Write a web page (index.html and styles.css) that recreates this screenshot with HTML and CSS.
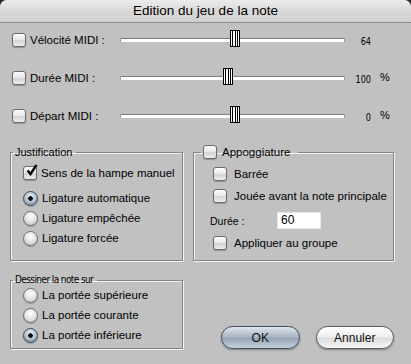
FILE: index.html
```html
<!DOCTYPE html>
<html lang="fr">
<head>
  <meta charset="UTF-8" />
  <title>Edition du jeu de la note</title>
  <link rel="stylesheet" href="styles.css">
</head>
<body>
  <div class="window">
    <div class="titlebar">Edition du jeu de la note</div>

    <div class="content">
      <div class="sliders">
        <div class="srow">
          <span class="cb"></span>
          <span class="slabel">Vélocité MIDI :</span>
          <div class="track"><span class="thumb" style="left:109px"></span></div>
          <span class="val">64</span>
          <span class="unit"></span>
        </div>
        <div class="srow">
          <span class="cb"></span>
          <span class="slabel">Durée MIDI :</span>
          <div class="track"><span class="thumb" style="left:102px"></span></div>
          <span class="val">100</span>
          <span class="unit">%</span>
        </div>
        <div class="srow">
          <span class="cb"></span>
          <span class="slabel">Départ MIDI :</span>
          <div class="track"><span class="thumb" style="left:109px"></span></div>
          <span class="val">0</span>
          <span class="unit">%</span>
        </div>
      </div>

      <div class="groups">
        <fieldset class="group just">
          <legend>Justification</legend>
          <div class="item first">
            <span class="cb on">
              <svg width="13" height="13" viewBox="0 0 13 13"><path d="M2.5 6.5 L5.5 10 L11.5 1" fill="none" stroke="#000" stroke-width="2.4" stroke-linejoin="miter"/></svg>
            </span>
            <span>Sens de la hampe manuel</span>
          </div>
          <div class="radios">
            <div class="item"><span class="rb on"></span><span>Ligature automatique</span></div>
            <div class="item"><span class="rb"></span><span>Ligature empêchée</span></div>
            <div class="item"><span class="rb"></span><span>Ligature forcée</span></div>
          </div>
        </fieldset>

        <fieldset class="group appo">
          <legend><span class="cb"></span><span>Appoggiature</span></legend>
          <div class="item first"><span class="cb"></span><span>Barrée</span></div>
          <div class="item"><span class="cb"></span><span>Jouée avant la note principale</span></div>
          <div class="duree">
            <span class="dlabel">Durée :</span>
            <span class="field">60</span>
          </div>
          <div class="item"><span class="cb"></span><span>Appliquer au groupe</span></div>
        </fieldset>

        <fieldset class="group staff">
          <legend class="narrow">Dessiner la note sur</legend>
          <div class="radios">
            <div class="item"><span class="rb"></span><span>La portée supérieure</span></div>
            <div class="item"><span class="rb"></span><span>La portée courante</span></div>
            <div class="item"><span class="rb on"></span><span>La portée inférieure</span></div>
          </div>
        </fieldset>

        <div class="buttons">
          <button class="btn default">OK</button>
          <button class="btn">Annuler</button>
        </div>
      </div>
    </div>
  </div>
</body>
</html>
```

FILE: styles.css
```css
html {
  background: #2a2a2a;
}

body {
  margin: 0;
  font-family: "Liberation Sans", Arial, sans-serif;
  font-size: 11.5px;
  color: #000;
}

.window {
  width: 411px;
  height: 364px;
  background: #c1c1c1;
  border-radius: 7px 7px 0 0;
  overflow: hidden;
}

.titlebar {
  height: 22px;
  line-height: 22px;
  text-align: center;
  font-size: 13.5px;
  background: linear-gradient(#ececec, #d9d9d9 50%, #cfcfcf);
  border-bottom: 1px solid #8c8c8c;
}

.content {
  padding: 8px 0 0 12px;
}

/* slider rows */
.sliders {
  display: flex;
  flex-direction: column;
  gap: 20px;
}

.srow {
  display: flex;
  align-items: center;
  height: 18px;
}

.slabel {
  width: 91px;
  margin-left: 4px;
}

.track {
  position: relative;
  width: 223px;
  height: 3px;
  border-top: 1px solid #7d7d7d;
  background: #fff;
  box-shadow: -1px 0 0 #9a9a9a, 1px 0 0 #9a9a9a;
}

.thumb {
  position: absolute;
  top: -9px;
  width: 8px;
  height: 15px;
  border: 1px solid #000;
  background:
    linear-gradient(90deg, transparent 1px, #000 1px, #000 2px, transparent 2px,
      transparent 4px, #000 4px, #000 5px, transparent 5px,
      transparent 6px, #000 6px, #000 7px, transparent 7px),
    #fff;
}

.val {
  width: 27px;
  text-align: right;
  font-family: "DejaVu Sans Condensed", "Liberation Sans Narrow", sans-serif;
  font-size: 10px;
  transform: scaleX(0.9);
  transform-origin: right;
  margin-top: 3px;
}

.unit {
  margin-left: 9px;
  font-size: 11px;
  margin-top: -3px;
}

/* checkbox and radio */
.cb {
  display: inline-block;
  flex: none;
  box-sizing: border-box;
  width: 14px;
  height: 14px;
  border: 1px solid #6a6a6a;
  border-radius: 3px;
  background: linear-gradient(#fdfdfd, #e6e6e6 50%, #d2d2d2 55%, #eeeeee);
  box-shadow: 0 1px 1px rgba(0, 0, 0, 0.25);
  position: relative;
}

.cb svg {
  position: absolute;
  left: 1px;
  top: -3px;
}

.rb {
  display: inline-block;
  flex: none;
  box-sizing: border-box;
  width: 15px;
  height: 15px;
  border: 1px solid #6f6f6f;
  border-radius: 50%;
  background: radial-gradient(circle at 50% 35%, #ffffff, #e6e6e6 45%, #bdbdbd);
  box-shadow: 0 1px 1px rgba(0, 0, 0, 0.2);
}

.rb.on {
  border-color: #3e4a58;
  background:
    radial-gradient(circle, #000 0 2px, transparent 2.5px),
    radial-gradient(circle at 50% 35%, #f0f4f8, #aebccb 55%, #5f7184);
}

/* group boxes */
.groups {
  display: grid;
  grid-template-columns: 173px 201px;
  column-gap: 10px;
  margin: 20px 0 0 -2px;
}

.group {
  margin: 0;
  padding: 0 0 0 12px;
  min-width: 0;
  border: 1px solid #858585;
  box-shadow: inset 1px 1px 0 #f3f3f3, 1px 1px 0 #f3f3f3;
}

.group legend {
  padding: 0 4px 0 2px;
  margin-left: -10px;
  line-height: 14px;
  font-size: 11px;
}

.group legend.narrow {
  font-family: "DejaVu Sans Condensed", "Liberation Sans Narrow", sans-serif;
  font-size: 10px;
  letter-spacing: -0.6px;
}

.appo legend {
  display: flex;
  align-items: center;
  gap: 5px;
  margin-left: -12px;
  padding: 0 8px 0 2px;
  font-size: 11.5px;
}

.item {
  display: flex;
  align-items: center;
  gap: 4px;
  height: 16px;
}

.just .first {
  margin-top: 6px;
}

.just .radios {
  display: flex;
  flex-direction: column;
  gap: 4px;
  margin: 9px 0 14px;
}

.appo {
  padding-left: 19px;
}

.appo .item .cb {
  margin-right: 3px;
}

.appo .first {
  margin-top: 7px;
  margin-bottom: 6px;
}

.duree {
  display: flex;
  align-items: center;
  margin: 8px 0 6px -3px;
}

.dlabel {
  width: 67px;
  font-size: 10.5px;
}

.field {
  width: 40px;
  height: 17px;
  line-height: 17px;
  padding-left: 4px;
  background: #fff;
  box-shadow: inset 0 0 0 1px #e8e8e8;
  font-size: 12px;
}

.staff {
  margin-top: 12px;
}

.staff .radios {
  display: flex;
  flex-direction: column;
  gap: 4px;
  margin: 0 0 5px;
}

/* buttons */
.buttons {
  display: flex;
  gap: 16px;
  align-self: end;
  margin: 0 0 0 28px;
}

.btn {
  width: 79px;
  height: 23px;
  border: 1px solid #5b5b5b;
  border-radius: 12px;
  font-family: "Liberation Sans", Arial, sans-serif;
  font-size: 12px;
  color: #111;
  background: linear-gradient(#ffffff, #f0f0f0 45%, #dedede 55%, #f6f6f6);
  box-shadow: 0 1px 2px rgba(0, 0, 0, 0.35);
  padding: 0;
}

.btn.default {
  border-color: #45505c;
  background: linear-gradient(#dfe5ec, #aab7c5 45%, #97a6b6 55%, #c5d0db);
}
```
